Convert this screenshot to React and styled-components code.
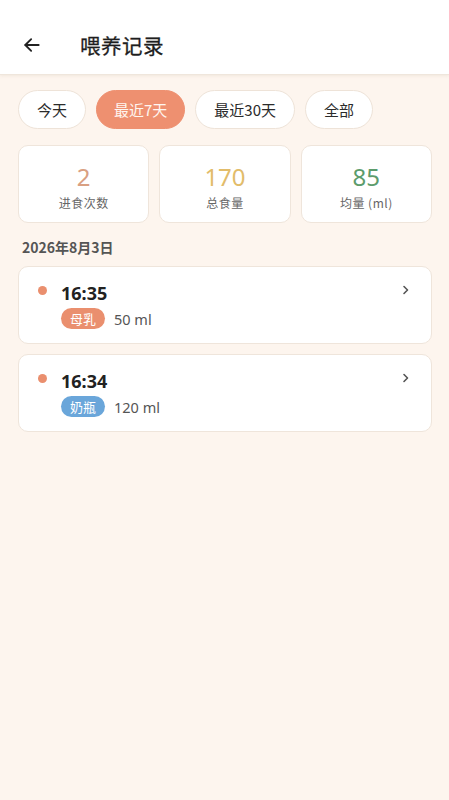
import React from "react";
import styled, { createGlobalStyle } from "styled-components";

const Global = createGlobalStyle`
  html, body { margin: 0; padding: 0; }
  body {
    background: #fdf5ee;
    font-family: "Noto Sans CJK SC", "Noto Sans", Roboto, sans-serif;
    -webkit-font-smoothing: antialiased;
  }
`;

const Page = styled.div`
  width: 449px;
  min-height: 800px;
  background: #fdf5ee;
  display: flex;
  flex-direction: column;
`;

const Header = styled.header`
  height: 75px;
  background: #ffffff;
  border-bottom: 1px solid #efe6dc;
  box-shadow: 0 1px 3px rgba(160, 130, 100, 0.12);
  display: flex;
  align-items: center;
  padding: 15px 0 0 20px;
  box-sizing: border-box;
`;

const BackButton = styled.button`
  width: 24px;
  height: 24px;
  padding: 0;
  border: 0;
  background: transparent;
  display: flex;
  align-items: center;
  justify-content: center;
  margin-right: 36px;
`;

const Title = styled.h1`
  margin: 0;
  font-size: 20.5px;
  font-weight: 400;
  color: #1e1e1e;
  letter-spacing: 0.5px;
  -webkit-text-stroke: 0.3px #1e1e1e;
`;

const Content = styled.main`
  padding: 15px 17px 0 18px;
  display: flex;
  flex-direction: column;
`;

const ChipRow = styled.div`
  display: flex;
  gap: 10px;
`;

const Chip = styled.button`
  height: 39px;
  padding: 0 ${(p) => p.$px}px;
  border-radius: 20px;
  border: 1px solid ${(p) => (p.$active ? "#ee9070" : "#eee3d8")};
  background: ${(p) => (p.$active ? "#ee9070" : "#ffffff")};
  color: ${(p) => (p.$active ? "#fff6f0" : "#2b2b2b")};
  font-family: "Noto Sans CJK SC", Roboto, sans-serif;
  font-size: 15px;
  box-sizing: border-box;
  display: flex;
  align-items: center;
  justify-content: center;
`;

const StatRow = styled.div`
  display: grid;
  grid-template-columns: repeat(3, 1fr);
  gap: 10px;
  margin-top: 16px;
`;

const StatCard = styled.div`
  height: 78px;
  background: #fff;
  border: 1px solid #efe5db;
  border-radius: 10px;
  box-sizing: border-box;
  display: flex;
  flex-direction: column;
  align-items: center;
  padding-top: 16px;
`;

const StatValue = styled.div`
  font-family: "Noto Sans", Roboto, sans-serif;
  font-size: 24px;
  line-height: 30px;
  color: ${(p) => p.$color};
`;

const StatLabel = styled.div`
  font-size: 12px;
  line-height: 16px;
  color: #666;
  margin-top: 3px;
  letter-spacing: 0.5px;
`;

const DateTitle = styled.div`
  margin: 14px 0 0 4px;
  font-size: 14px;
  font-weight: 700;
  color: #555;
  line-height: 20px;
`;

const List = styled.div`
  display: flex;
  flex-direction: column;
  gap: 10px;
  margin-top: 9px;
`;

const RecordCard = styled.div`
  height: 78px;
  background: #fff;
  border: 1px solid #efe5db;
  border-radius: 10px;
  box-sizing: border-box;
  display: flex;
  align-items: flex-start;
  padding: 14px 20px 0 19px;
`;

const Dot = styled.span`
  width: 9px;
  height: 9px;
  border-radius: 50%;
  background: #ea8f6e;
  margin-top: 5px;
  flex-shrink: 0;
`;

const RecordBody = styled.div`
  display: flex;
  flex-direction: column;
  margin-left: 14px;
  flex: 1;
`;

const Time = styled.div`
  font-family: "Noto Sans", Roboto, sans-serif;
  font-size: 18px;
  font-weight: 700;
  color: #222;
  line-height: 24px;
`;

const Meta = styled.div`
  display: flex;
  align-items: center;
  gap: 9px;
  margin-top: 3px;
`;

const Tag = styled.span`
  height: 21px;
  padding: 0 9px;
  border-radius: 11px;
  background: ${(p) => p.$bg};
  color: #fff;
  font-size: 13px;
  display: flex;
  align-items: center;
`;

const Amount = styled.span`
  font-family: "Noto Sans", Roboto, sans-serif;
  font-size: 14.5px;
  color: #555;
`;

const Chevron = styled.svg`
  margin-top: 4px;
  margin-right: 2px;
  flex-shrink: 0;
`;

const chips = [
  { label: "今天", px: 18 },
  { label: "最近7天", px: 17, active: true },
  { label: "最近30天", px: 18 },
  { label: "全部", px: 18 },
];

const stats = [
  { value: "2", label: "进食次数", color: "#d9a082" },
  { value: "170", label: "总食量", color: "#e2bc6a" },
  { value: "85", label: "均量 (ml)", color: "#5c9c6c" },
];

const records = [
  { time: "16:35", tag: "母乳", bg: "#ea8f6e", amount: "50 ml" },
  { time: "16:34", tag: "奶瓶", bg: "#6aa6da", amount: "120 ml" },
];

export default function App() {
  return (
    <Page>
      <Global />
      <Header>
        <BackButton aria-label="back">
          <svg width="20" height="20" viewBox="0 0 24 24" fill="none" stroke="#222" strokeWidth="2.2" strokeLinecap="round" strokeLinejoin="round">
            <path d="M20 12H4" />
            <path d="M11 5l-7 7 7 7" />
          </svg>
        </BackButton>
        <Title>喂养记录</Title>
      </Header>
      <Content>
        <ChipRow>
          {chips.map((c) => (
            <Chip key={c.label} $active={c.active} $px={c.px}>
              {c.label}
            </Chip>
          ))}
        </ChipRow>
        <StatRow>
          {stats.map((s) => (
            <StatCard key={s.label}>
              <StatValue $color={s.color}>{s.value}</StatValue>
              <StatLabel>{s.label}</StatLabel>
            </StatCard>
          ))}
        </StatRow>
        <DateTitle>2026年8月3日</DateTitle>
        <List>
          {records.map((r) => (
            <RecordCard key={r.time}>
              <Dot />
              <RecordBody>
                <Time>{r.time}</Time>
                <Meta>
                  <Tag $bg={r.bg}>{r.tag}</Tag>
                  <Amount>{r.amount}</Amount>
                </Meta>
              </RecordBody>
              <Chevron width="7" height="10" viewBox="0 0 7 10" fill="none" stroke="#555" strokeWidth="1.6" strokeLinecap="round" strokeLinejoin="round">
                <path d="M2 1.5l3.5 3.5L2 8.5" />
              </Chevron>
            </RecordCard>
          ))}
        </List>
      </Content>
    </Page>
  );
}
